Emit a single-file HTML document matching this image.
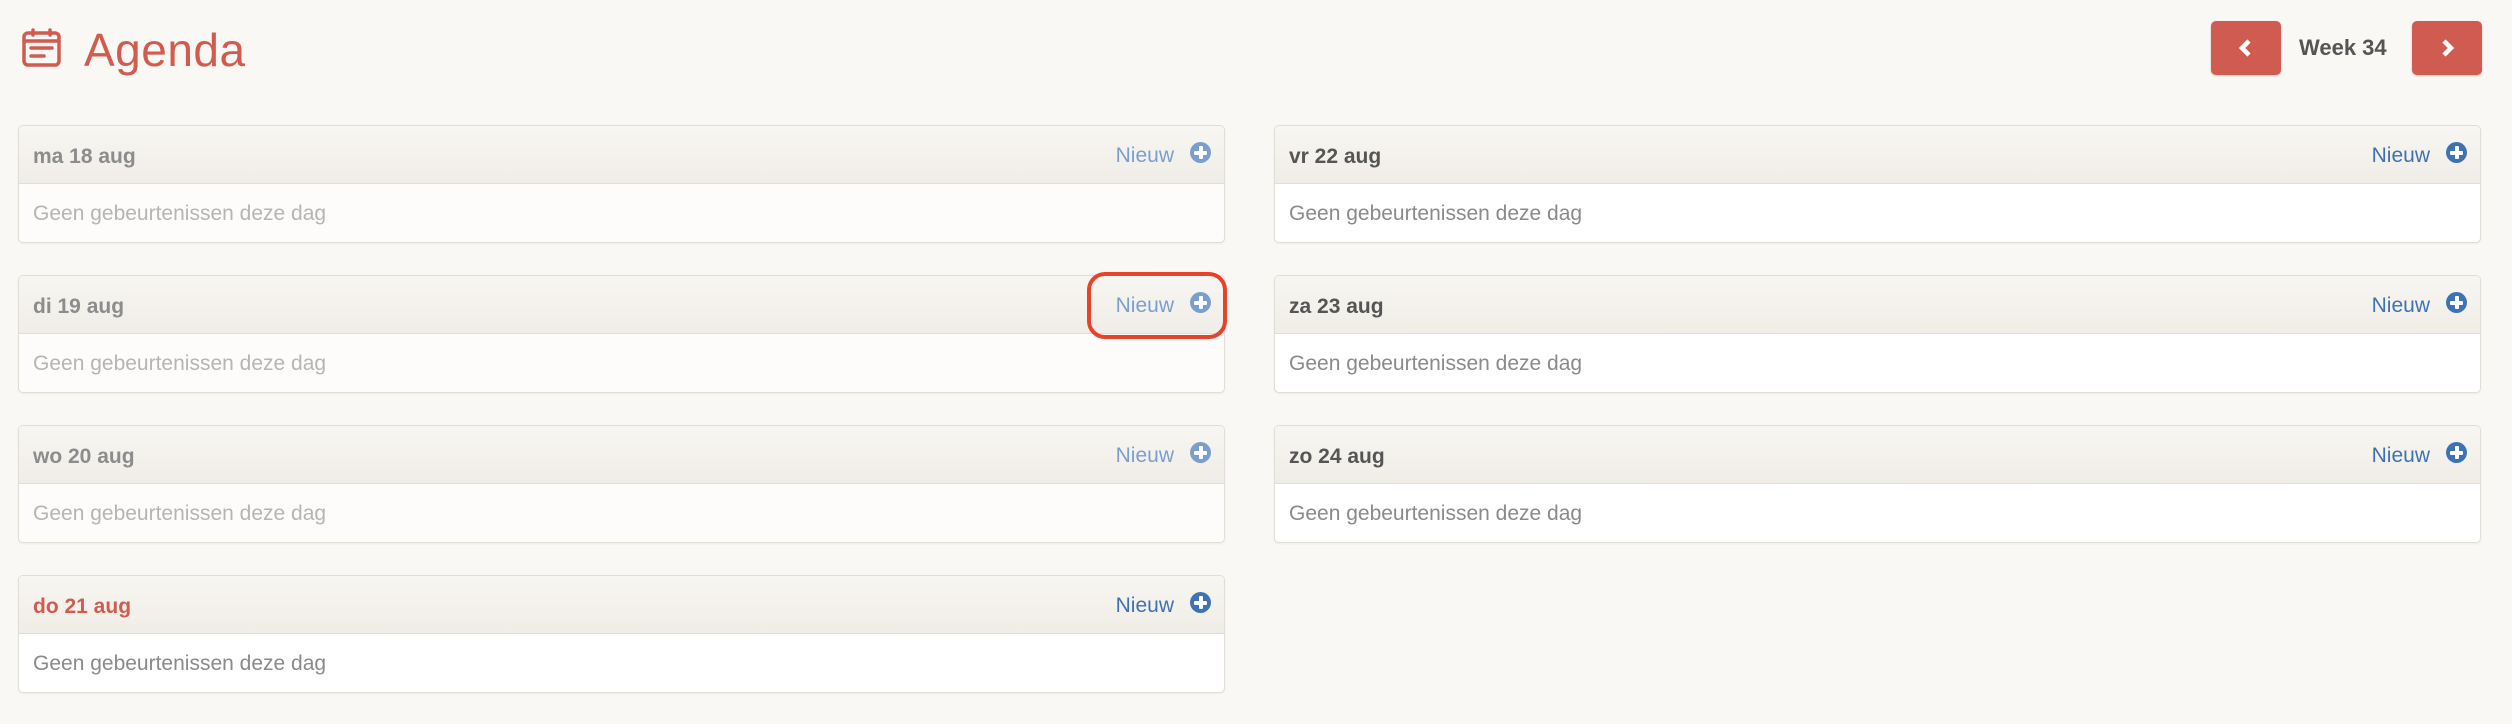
<!DOCTYPE html>
<html><head><meta charset="utf-8"><style>
*{box-sizing:border-box;margin:0;padding:0}
body{width:2512px;height:724px;background:#f9f8f4;font-family:"Liberation Sans",sans-serif;position:relative;overflow:hidden}
.title{position:absolute;left:84px;top:23px;font-size:46px;color:#d25b4f;letter-spacing:0.5px}
.icon{position:absolute;left:22px;top:28px}
.btn{position:absolute;top:21px;width:70px;height:54px;background:#d05c51;border-radius:5px;box-shadow:0 1px 2px rgba(0,0,0,.2)}
.btn svg{position:absolute;left:26px;top:18px}
.week{position:absolute;left:2299px;top:35px;font-size:22px;font-weight:bold;color:#555}
.card{position:absolute;width:1207px;height:118px;border:1px solid #e1ded8;border-radius:5px;overflow:hidden;background:#fdfcfa;box-shadow:0 1px 2px rgba(0,0,0,.05)}
.card.f{background:#fff}
.hd{height:58px;border-bottom:1px solid #e1ded8;background:linear-gradient(#f8f6f2,#f0ede7);position:relative}
.hd .d{position:absolute;left:14px;top:19px;font-size:21px;font-weight:bold;color:#8c8c8c}
.f .hd .d{color:#555}
.hd .d.t{color:#d25b4f}
.hd .n{position:absolute;right:50px;top:18px;font-size:21px;color:#7a9fcc}
.f .hd .n,.hd .n.b{color:#3f72b0}
.hd .p{position:absolute;right:13px;top:16px;width:21px;height:21px;border-radius:50%;background:#7a9fcc}
.f .hd .p,.hd .p.b{background:#3f72b0}
.hd .p:before{content:"";position:absolute;left:4px;top:8.5px;width:13px;height:4px;background:#fff;border-radius:1px}
.hd .p:after{content:"";position:absolute;left:8.5px;top:4px;width:4px;height:13px;background:#fff;border-radius:1px}
.bd{padding:18px 14px;font-size:21px;color:#b5b5b5}
.f .bd,.bd.k{color:#8a8a8a}
.hl{position:absolute;left:1087px;top:272px;width:140px;height:67px;border:4px solid #e8432a;border-radius:18px}
</style></head><body>
<svg class="icon" width="40" height="40" viewBox="0 0 40 40" fill="none" stroke="#d25b4f" stroke-width="3.5" stroke-linecap="round">
<rect x="2" y="5" width="35" height="32" rx="4"/><line x1="2" y1="13" x2="37" y2="13"/><line x1="11" y1="2" x2="11" y2="7"/><line x1="28" y1="2" x2="28" y2="7"/><line x1="9" y1="20" x2="30" y2="20"/><line x1="9" y1="28" x2="22" y2="28"/></svg>
<div class="title">Agenda</div>
<div class="btn" style="left:2211px"><svg width="18" height="18" viewBox="0 0 18 18"><path d="M12 2 L5 9 L12 16" stroke="#fff" stroke-width="4.5" fill="none"/></svg></div>
<div class="week">Week 34</div>
<div class="btn" style="left:2412px"><svg width="18" height="18" viewBox="0 0 18 18"><path d="M6 2 L13 9 L6 16" stroke="#fff" stroke-width="4.5" fill="none"/></svg></div>

<div class="card" style="left:18px;top:125px"><div class="hd"><span class="d">ma 18 aug</span><span class="n">Nieuw</span><span class="p"></span></div><div class="bd">Geen gebeurtenissen deze dag</div></div>
<div class="card" style="left:18px;top:275px"><div class="hd"><span class="d">di 19 aug</span><span class="n">Nieuw</span><span class="p"></span></div><div class="bd">Geen gebeurtenissen deze dag</div></div>
<div class="card" style="left:18px;top:425px"><div class="hd"><span class="d">wo 20 aug</span><span class="n">Nieuw</span><span class="p"></span></div><div class="bd">Geen gebeurtenissen deze dag</div></div>
<div class="card f" style="left:18px;top:575px"><div class="hd"><span class="d t">do 21 aug</span><span class="n">Nieuw</span><span class="p"></span></div><div class="bd">Geen gebeurtenissen deze dag</div></div>

<div class="card f" style="left:1274px;top:125px"><div class="hd"><span class="d">vr 22 aug</span><span class="n">Nieuw</span><span class="p"></span></div><div class="bd">Geen gebeurtenissen deze dag</div></div>
<div class="card f" style="left:1274px;top:275px"><div class="hd"><span class="d">za 23 aug</span><span class="n">Nieuw</span><span class="p"></span></div><div class="bd">Geen gebeurtenissen deze dag</div></div>
<div class="card f" style="left:1274px;top:425px"><div class="hd"><span class="d">zo 24 aug</span><span class="n">Nieuw</span><span class="p"></span></div><div class="bd">Geen gebeurtenissen deze dag</div></div>

<div class="hl"></div>
</body></html>
